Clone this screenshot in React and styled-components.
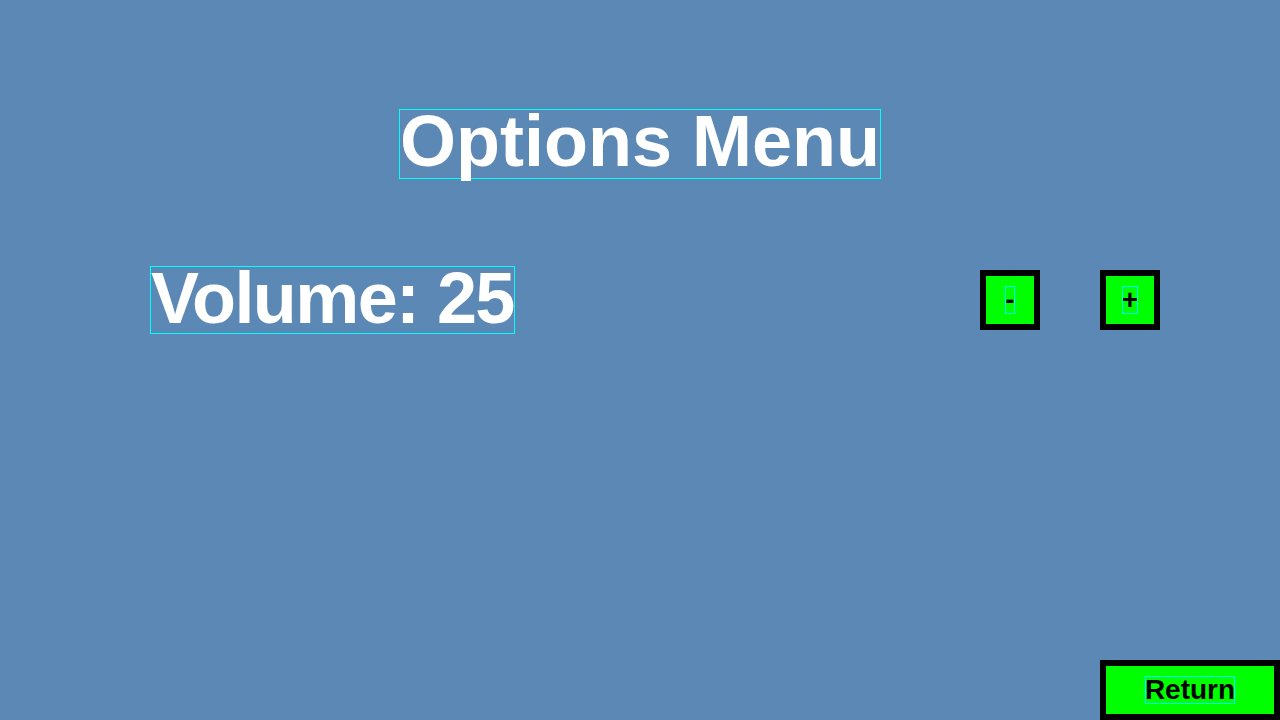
import React, { useState } from "react";
import styled, { createGlobalStyle } from "styled-components";

const GlobalStyle = createGlobalStyle`
  html, body {
    margin: 0;
    padding: 0;
    background-color: #5b88b5;
    font-family: "Liberation Sans", Arial, sans-serif;
  }
`;

// whole screen
const Screen = styled.div`
  width: 1280px;
  height: 720px;
  display: flex;
  flex-direction: column;
  overflow: hidden;
`;

const TitleRow = styled.div`
  display: flex;
  justify-content: center;
  padding-top: 109px;
`;

// text label with the cyan debug outline
const Label = styled.span`
  display: inline-block;
  font-weight: 700;
  font-size: ${(p) => p.size || 72}px;
  line-height: ${(p) => p.lh || 62}px;
  letter-spacing: ${(p) => p.spacing || 0}px;
  color: ${(p) => p.color || "white"};
  padding-bottom: ${(p) => p.pb || 0}px;
  border: 1px solid #00ffff;
  white-space: nowrap;
`;

const VolumeRow = styled.div`
  display: flex;
  align-items: center;
  justify-content: space-between;
  margin-top: 87px;
  padding: 0 120px 0 150px;
`;

const ButtonGroup = styled.div`
  display: flex;
  gap: 60px;
`;

const GreenButton = styled.button`
  box-sizing: border-box;
  width: ${(p) => p.w || 60}px;
  height: 60px;
  padding: 0;
  border: 6px solid black;
  background-color: #00ff00;
  display: flex;
  align-items: center;
  justify-content: center;
  cursor: pointer;
  font-family: inherit;
`;

const ButtonText = styled.span`
  font-weight: 700;
  font-size: 28px;
  line-height: 28px;
  color: black;
  outline: 1px solid #00ffff;
  outline-offset: -1px;
`;

const Footer = styled.div`
  margin-top: auto;
  display: flex;
  justify-content: flex-end;
`;

function App() {
  const [volume, setVolume] = useState(25);

  return (
    <Screen>
      <GlobalStyle />
      <TitleRow>
        <Label pb={6}>Options Menu</Label>
      </TitleRow>

      <VolumeRow>
        <Label pb={4} spacing={-1.6}>Volume: {volume}</Label>
        <ButtonGroup>
          <GreenButton onClick={() => setVolume(Math.max(0, volume - 1))}>
            <ButtonText>-</ButtonText>
          </GreenButton>
          <GreenButton onClick={() => setVolume(Math.min(100, volume + 1))}>
            <ButtonText>+</ButtonText>
          </GreenButton>
        </ButtonGroup>
      </VolumeRow>

      <Footer>
        <GreenButton w={180}>
          <ButtonText>Return</ButtonText>
        </GreenButton>
      </Footer>
    </Screen>
  );
}

export default App;
